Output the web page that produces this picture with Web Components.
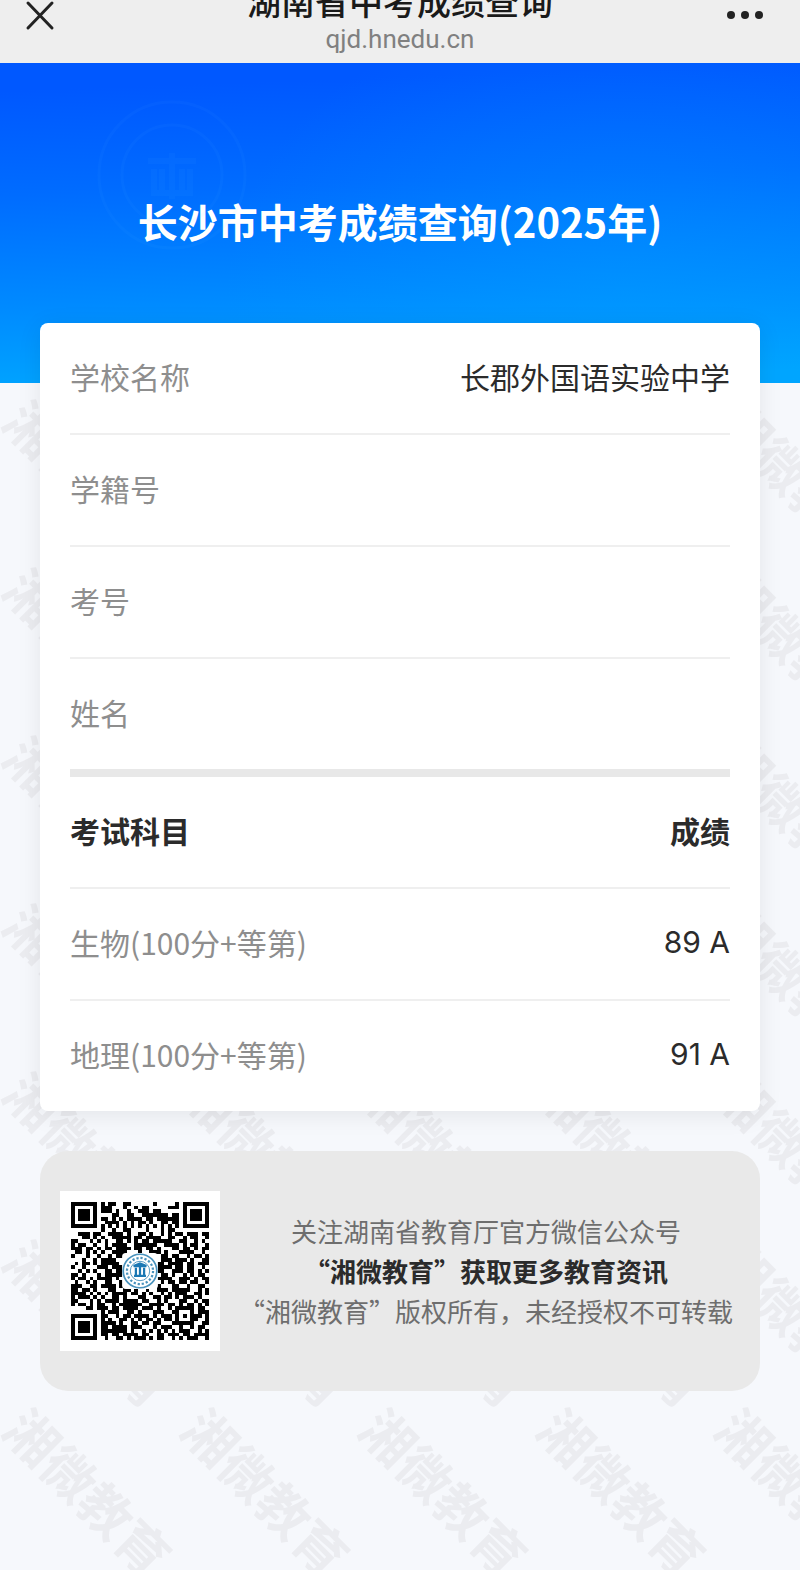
<!DOCTYPE html>
<html lang="zh-CN">
<head>
<meta charset="utf-8">
<meta name="viewport" content="width=device-width, initial-scale=1">
<title>湖南省中考成绩查询</title>
<style>
    body {
        margin: 0;
        background-color: #f6f8fc;
        color: #2b2b2b;
        font-family: "Noto Sans CJK SC", sans-serif;
        font-size: 30px;
    }
</style>
</head>
<body>
<score-page>
    <nav-bar slot="nav" site="qjd.hnedu.cn">湖南省中考成绩查询</nav-bar>
    <page-banner slot="banner">长沙市中考成绩查询(2025年)</page-banner>
    <result-card>
        <info-row label="学校名称">长郡外国语实验中学</info-row>
        <info-row label="学籍号"></info-row>
        <info-row label="考号"></info-row>
        <info-row label="姓名"></info-row>
        <score-table></score-table>
    </result-card>
    <follow-card>
        <qr-code slot="code"></qr-code>
        <span>关注湖南省教育厅官方微信公众号</span>
        <strong>“湘微教育”获取更多教育资讯</strong>
        <span>“湘微教育”版权所有，未经授权不可转载</span>
    </follow-card>
</score-page>

<script>
class ScorePage extends HTMLElement {

    constructor() {
        super();
        this.attachShadow({mode: "open"});
        this.shadowRoot.innerHTML = `
            <style>
                :host {
                    display: block;
                    position: relative;
                    min-height: 100vh;
                    overflow: hidden;
                }
                water-mark {
                    position: absolute;
                    inset: 383px 0 0 0;
                }
                .top, main {
                    position: relative;
                }
                main {
                    display: flex;
                    flex-direction: column;
                    gap: 40px;
                    margin-top: -60px;
                    padding: 0 40px 40px;
                }
            </style>
            <water-mark text="湘微教育"></water-mark>
            <div class="top">
                <slot name="nav"></slot>
                <slot name="banner"></slot>
            </div>
            <main><slot></slot></main>
        `;
    }

}

// repeated diagonal text behind the cards
class WaterMark extends HTMLElement {

    constructor() {
        super();
        this.attachShadow({mode: "open"});
        const mark = `<span>${this.getAttribute("text")}</span>`;
        this.shadowRoot.innerHTML = `
            <style>
                :host {
                    display: grid;
                    grid-template-columns: repeat(5, 178px);
                    grid-auto-rows: 168px;
                    overflow: hidden;
                    color: #ebecf0;
                    font-size: 52px;
                    font-weight: 700;
                    line-height: 60px;
                    user-select: none;
                }
                span {
                    justify-self: center;
                    margin-top: 70px;
                    height: 60px;
                    white-space: nowrap;
                    transform: rotate(45deg);
                }
            </style>
            ${mark.repeat(35)}
        `;
    }

}

class NavBar extends HTMLElement {

    constructor() {
        super();
        this.attachShadow({mode: "open"});
        this.shadowRoot.innerHTML = `
            <style>
                :host {
                    display: block;
                    background-color: #eeeeee;
                }
                header {
                    display: flex;
                    justify-content: space-between;
                    height: 63px;
                    padding: 0 24px;
                    overflow: hidden;
                }
                button {
                    align-self: flex-start;
                    border: 0;
                    padding: 0;
                    background: none;
                    color: #222;
                }
                svg {
                    display: block;
                }
                .titles {
                    display: flex;
                    flex-direction: column;
                    justify-content: flex-end;
                    align-items: center;
                    padding-bottom: 9px;
                }
                .name {
                    flex: none;
                    font-size: 34px;
                    font-weight: 500;
                    line-height: 46px;
                    color: #1a1a1a;
                }
                .site {
                    flex: none;
                    font-family: Roboto, sans-serif;
                    font-size: 26px;
                    line-height: 30px;
                    color: #808080;
                }
            </style>
            <header>
                <button aria-label="关闭">
                    <svg width="52" height="32" viewBox="0 0 52 32" fill="none" stroke="currentColor" stroke-width="3" stroke-linecap="round">
                        <path d="M4 3L28 28M28 3L4 28"/>
                    </svg>
                </button>
                <div class="titles">
                    <div class="name"><slot></slot></div>
                    <div class="site">${this.getAttribute("site")}</div>
                </div>
                <button aria-label="更多">
                    <svg width="52" height="32" viewBox="0 0 52 32" fill="currentColor">
                        <circle cx="7" cy="15" r="4"/>
                        <circle cx="21" cy="15" r="4"/>
                        <circle cx="35" cy="15" r="4"/>
                    </svg>
                </button>
            </header>
        `;
    }

}

class PageBanner extends HTMLElement {

    constructor() {
        super();
        this.attachShadow({mode: "open"});
        this.shadowRoot.innerHTML = `
            <style>
                :host {
                    display: block;
                    position: relative;
                    background:
                        radial-gradient(ellipse 50% 90% at 78% 70%, #00a0ff55, #00a0ff00),
                        linear-gradient(178deg, #0058ff 8%, #006cff 38%, #008aff 70%, #00a6ff 96%);
                }
                .seal {
                    position: absolute;
                    left: 96px;
                    top: 36px;
                    opacity: .04;
                }
                h1 {
                    display: flex;
                    align-items: center;
                    justify-content: center;
                    box-sizing: border-box;
                    min-height: 320px;
                    margin: 0;
                    padding-bottom: 4px;
                    color: #fff;
                    font-size: 40px;
                    font-weight: 700;
                    line-height: 60px;
                }
            </style>
            <svg class="seal" width="152" height="152" viewBox="0 0 152 152" fill="none" stroke="#6cf" stroke-width="3">
                <circle cx="76" cy="76" r="73"/>
                <circle cx="76" cy="76" r="50"/>
                <path d="M52 62H100M58 70V94H94V70M76 54V100M66 70V94M86 70V94" stroke-width="6"/>
            </svg>
            <h1><slot></slot></h1>
        `;
    }

}

class ResultCard extends HTMLElement {

    constructor() {
        super();
        this.attachShadow({mode: "open"});
        this.shadowRoot.innerHTML = `
            <style>
                :host {
                    display: block;
                    padding: 0 30px;
                    border-radius: 8px;
                    background-color: #fff;
                    box-shadow: 0 4px 24px rgba(0, 0, 0, .08);
                }
            </style>
            <slot></slot>
        `;
    }

}

class InfoRow extends HTMLElement {

    constructor() {
        super();
        this.attachShadow({mode: "open"});
        this.shadowRoot.innerHTML = `
            <style>
                :host {
                    display: block;
                    border-bottom: 2px solid #efefef;
                }
                :host(:nth-of-type(4)) {
                    border-bottom: 8px solid #e8e8e8;
                }
                dl {
                    display: flex;
                    justify-content: space-between;
                    margin: 0;
                    padding: 30px 0 34px;
                    line-height: 46px;
                }
                dt {
                    color: #8e8e8e;
                }
                dd {
                    margin: 0;
                }
            </style>
            <dl>
                <dt>${this.getAttribute("label")}</dt>
                <dd><slot></slot></dd>
            </dl>
        `;
    }

}

class ScoreTable extends HTMLElement {

    constructor() {
        super();
        this.attachShadow({mode: "open"});
        this.shadowRoot.innerHTML = `
            <style>
                :host {
                    display: block;
                }
                table {
                    width: 100%;
                    border-spacing: 0;
                    line-height: 46px;
                }
                th, td {
                    padding: 30px 0 34px;
                    border-bottom: 2px solid #efefef;
                    text-align: left;
                }
                tbody th {
                    color: #8e8e8e;
                    font-weight: 400;
                }
                tr > :last-child {
                    text-align: right;
                }
                tbody tr:last-child > * {
                    border-bottom: 0;
                }
                td {
                    font-family: Inter, sans-serif;
                    vertical-align: baseline;
                }
            </style>
            <table>
                <thead>
                    <tr><th scope="col">考试科目</th><th scope="col">成绩</th></tr>
                </thead>
                <tbody>
                    <tr><th scope="row">生物(100分+等第)</th><td>89 A</td></tr>
                    <tr><th scope="row">地理(100分+等第)</th><td>91 A</td></tr>
                </tbody>
            </table>
        `;
    }

}

class FollowCard extends HTMLElement {

    constructor() {
        super();
        this.attachShadow({mode: "open"});
        this.shadowRoot.innerHTML = `
            <style>
                :host {
                    display: flex;
                    align-items: center;
                    gap: 12px;
                    padding: 40px 20px;
                    border-radius: 28px;
                    background-color: #e9e9e9;
                }
                .text {
                    display: flex;
                    flex: 1;
                    flex-direction: column;
                    align-items: center;
                    color: #6e6e6e;
                    font-size: 26px;
                    line-height: 40px;
                }
                ::slotted(strong) {
                    color: #2b2b2b;
                }
            </style>
            <slot name="code"></slot>
            <div class="text"><slot></slot></div>
        `;
    }

}

class QrCode extends HTMLElement {

    constructor() {
        super();
        const rows = [
            "#######.#.##..##......#.....#.#######",
            "#.....#.###...#..#.##.....###.#.....#",
            "#.###.#.###.#..#..###.##......#.###.#",
            "#.###.#....##..##..#######.##.#.###.#",
            "#.###.#.##.#.#.####.##.######.#.###.#",
            "#.....#..####.#.#.##.#..##.##.#.....#",
            "#######.#.#.#.#.#.#.#.#.#.#.#.#######",
            "........#..#..##....#...#.##.........",
            "..###.##..####.#..##.#..#.#.##.###.##",
            "...##.#.#..#####.##.####..##..#.##..#",
            "##...#.#.#..##.#.#.##.#####..##..#.#.",
            "#.##..#..#.####..######..####.#.##..#",
            "###.##.#.##.####.##.##.#...##.##.#.##",
            ".##.#.#.#..####...#..###.#...####..#.",
            "#...#..#..#.###.#.#.##..##.##..#.##.#",
            "...#..#.####..##......#.###.###.#..##",
            ".#.##.#.#####..........##.####.##.###",
            "#..#...###.####........####.##.##..#.",
            "..#.#.#..##.##.........##..###.##.#.#",
            "##.#...#.#####........#.##.#..#.#.##.",
            "#.##.#.####.#.#........####..###.#.##",
            ".#..#.#..##..#.#........#.##.##.##..#",
            "###..##.####.#........##...##..#..##.",
            "##.##.#...##..##.#..#..###.#####..#.#",
            "####.#.#.#.####.##.#.#..#.#.###..##.#",
            "#.###.#.#..##.#...##..##.##.#.###.#..",
            "##...#.#.####.####.##..#.#...##..#.##",
            "#.##.#.##..#.######..####.##.#.##.#.#",
            "....##.###.##.####.###.#..#.#####.##.",
            "........#.###..##.#...###..##...#.###",
            "#######.##..#.##.####.#.###.#.#.###.#",
            "#.....#.#.#..##.#.#.##.#.##.#...##..#",
            "#.###.#.####.#..##.##.##...######..##",
            "#.###.#.##.####.###...#.###..#..#.##.",
            "#.###.#.#######.#..#.#.#.#.#.###..#.#",
            "#.....#.##.##.####.##..##.###.##.####",
            "#######..#..##.#.###.#.##..#.#.###..#"
        ];
        let d = "";
        rows.forEach((row, y) => {
            [...row].forEach((cell, x) => {
                if (cell === "#") d += `M${x} ${y}h1v1h-1z`;
            });
        });
        this.attachShadow({mode: "open"});
        this.shadowRoot.innerHTML = `
            <style>
                :host {
                    display: block;
                    flex: none;
                    box-sizing: border-box;
                    width: 160px;
                    height: 160px;
                    padding: 11px;
                    background-color: #fff;
                }
                svg {
                    display: block;
                    width: 100%;
                    height: 100%;
                }
            </style>
            <svg viewBox="0 0 37 37" role="img" aria-label="湘微教育二维码">
                <path d="${d}" shape-rendering="crispEdges"/>
                <rect x="13.7" y="13.7" width="9.6" height="9.6" rx="1" fill="#fff"/>
                <g fill="none" stroke="#4a93bd">
                    <circle cx="18.5" cy="18.5" r="4.5" stroke-width=".45"/>
                    <circle cx="18.5" cy="18.5" r="3.5" stroke-width=".6" stroke-dasharray=".6 .5"/>
                    <circle cx="18.5" cy="18.5" r="2.6" stroke-width=".25"/>
                    <path d="M16.8 17.2l1.7-.7 1.7.7zM17.4 17.6v2M18.5 16.5v3.4M19.6 17.6v2M16.9 19.8h3.2" stroke="#1b78b4" stroke-width=".6"/>
                </g>
            </svg>
        `;
    }

}

customElements.define("water-mark", WaterMark);
customElements.define("nav-bar", NavBar);
customElements.define("page-banner", PageBanner);
customElements.define("info-row", InfoRow);
customElements.define("score-table", ScoreTable);
customElements.define("result-card", ResultCard);
customElements.define("qr-code", QrCode);
customElements.define("follow-card", FollowCard);
customElements.define("score-page", ScorePage);
</script>
</body>
</html>
